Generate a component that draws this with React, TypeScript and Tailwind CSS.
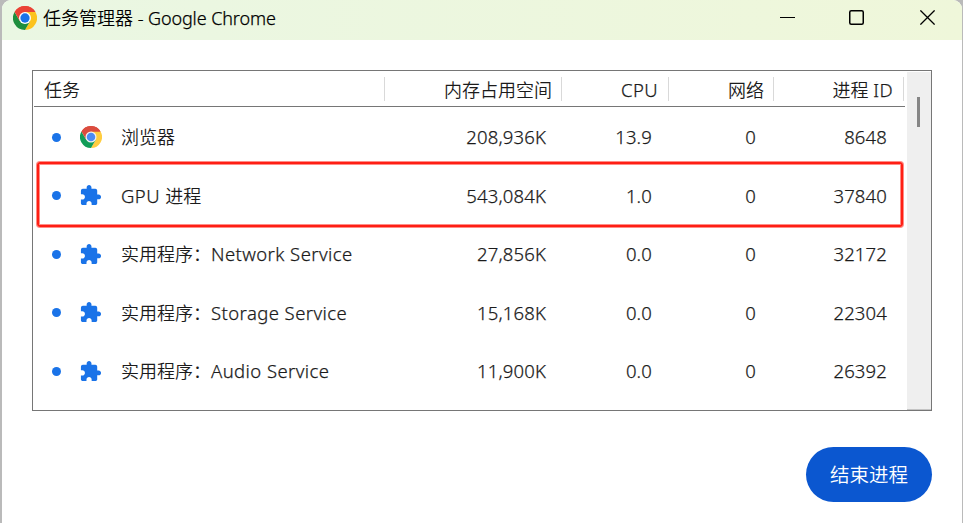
import type { ReactNode } from "react";

type Process = {
  name: ReactNode;
  memory: string;
  cpu: string;
  network: string;
  pid: string;
  chrome?: boolean;
};

const latin = "text-[18.5px] font-light tracking-[0.42px] [-webkit-text-stroke:0.25px_#1b1b1b]";
const number = "text-right text-[18.5px] font-light tracking-[0.15px] [-webkit-text-stroke:0.25px_#1b1b1b]";

const processes: Process[] = [
  { name: "浏览器", memory: "208,936K", cpu: "13.9", network: "0", pid: "8648", chrome: true },
  { name: <><span className={latin}>GPU </span>进程</>, memory: "543,084K", cpu: "1.0", network: "0", pid: "37840" },
  { name: <>实用程序：<span className={latin}>Network Service</span></>, memory: "27,856K", cpu: "0.0", network: "0", pid: "32172" },
  { name: <>实用程序：<span className={latin}>Storage Service</span></>, memory: "15,168K", cpu: "0.0", network: "0", pid: "22304" },
  { name: <>实用程序：<span className={latin}>Audio Service</span></>, memory: "11,900K", cpu: "0.0", network: "0", pid: "26392" },
];

const columns = "grid grid-cols-[351px_177px_107px_105px_130px]";

function ChromeLogo({ className, muted }: { className: string; muted?: boolean }) {
  const red = muted ? "#db4c3f" : "#ea4335";
  const green = muted ? "#129d58" : "#1e8e3e";
  const yellow = muted ? "#ffcd40" : "#fcc31e";
  return (
    <svg viewBox="0 0 48 48" className={className} aria-hidden="true">
      <path d="M24 24 3.2 12A24 24 0 0 1 44.8 12Z" fill={red} />
      <path d="M24 12H44.8A24 24 0 0 1 24 48L34.4 30Z" fill={yellow} />
      <path d="M13.6 30 3.2 12A24 24 0 0 0 24 48L34.4 30Z" fill={green} />
      <path d="M24 12H44.8A24 24 0 0 0 3.2 12L13.6 30Z" fill={red} />
      <circle cx="24" cy="24" r="12" fill={muted ? "#f1f1f1" : "#fff"} />
      <circle cx="24" cy="24" r="9.3" fill={muted ? "#4c8bf5" : "#1a73e8"} />
    </svg>
  );
}

function PuzzleIcon() {
  return (
    <svg viewBox="0 0 24 24" className="mr-px size-[23px]" fill="#1a73e8" aria-hidden="true">
      <path d="M20.5 11H19V7c0-1.1-.9-2-2-2h-4V3.5C13 2.12 11.88 1 10.5 1S8 2.12 8 3.5V5H4c-1.1 0-1.99.9-1.99 2v3.8H3.5c1.49 0 2.7 1.21 2.7 2.7s-1.21 2.7-2.7 2.7H2V20c0 1.1.9 2 2 2h3.8v-1.5c0-1.49 1.21-2.7 2.7-2.7s2.7 1.21 2.7 2.7V22H17c1.1 0 2-.9 2-2v-4h1.5c1.38 0 2.5-1.12 2.5-2.5S21.88 11 20.5 11z" />
    </svg>
  );
}

function HeaderCell({ children }: { children: ReactNode }) {
  return (
    <div className="flex h-6 items-center justify-end border-r border-[#d9d9d9] pr-[9px]">{children}</div>
  );
}

function Row({ process }: { process: Process }) {
  return (
    <div className={`${columns} h-[58.5px] items-center`}>
      <div className="flex items-center pl-[18px]">
        <span className="size-[9px] rounded-full bg-[#1a73e8]" />
        <span className="ml-[18px] flex w-6 justify-center">
          {process.chrome ? <ChromeLogo className="size-[22px]" muted /> : <PuzzleIcon />}
        </span>
        <span className="ml-[18px] whitespace-nowrap">{process.name}</span>
      </div>
      <div className={`pr-[16px] ${number}`}>{process.memory}</div>
      <div className={`pr-[17px] ${number}`}>{process.cpu}</div>
      <div className={`pr-[18px] ${number}`}>{process.network}</div>
      <div className={`pr-[17px] ${number}`}>{process.pid}</div>
    </div>
  );
}

export default function App() {
  return (
    <div className="h-[523px] w-[963px] overflow-hidden bg-[#bababa] font-['Noto_Sans','Noto_Sans_CJK_SC',sans-serif] text-[18px] leading-6 font-[350] text-[#1b1b1b]">
      <div className="ml-[2px] flex h-full w-[960px] flex-col overflow-hidden rounded-t-[9px] bg-white">
        <header className="flex h-10 shrink-0 items-center justify-between bg-linear-to-r from-[#eaf7e3] to-[#eff7da] text-black">
          <div className="flex items-center pb-[5px] pl-[11px]">
            <ChromeLogo className="size-6" />
            <h1 className="ml-[6px]">任务管理器 <span className="font-light tracking-[-0.1px] [-webkit-text-stroke:0.25px_#000]">- Google Chrome</span></h1>
          </div>
          <div className="flex items-center pr-[27px] pb-[5px]">
            <svg viewBox="0 0 15 15" className="size-[15px]" aria-hidden="true">
              <path d="M0 7.5H15" stroke="#000" />
            </svg>
            <svg viewBox="0 0 15 15" className="ml-[54px] size-[15px]" aria-hidden="true">
              <rect x=".75" y=".75" width="13.5" height="13.5" rx="1.5" fill="none" stroke="#000" strokeWidth="1.5" />
            </svg>
            <svg viewBox="0 0 15 15" className="ml-14 size-[15px]" aria-hidden="true">
              <path d="M.4.4 14.6 14.6M14.6.4.4 14.6" stroke="#000" strokeWidth="1.3" />
            </svg>
          </div>
        </header>

        <main className="pt-[30px] pl-[30px]">
          <section className="relative flex h-[341px] w-[900px] justify-between border border-[#767676]">
            <div className="w-[872px] pl-px">
              <div className={`${columns} h-9 items-center border-b border-[#767676] pt-px`}>
                <div className="flex h-6 items-center border-r border-[#d9d9d9] pt-px pl-[10px]">任务</div>
                <HeaderCell><span className="mt-px">内存占用空间</span></HeaderCell>
                <HeaderCell><span className={`mt-px mr-px ${latin}`}>CPU</span></HeaderCell>
                <HeaderCell><span className="mt-px">网络</span></HeaderCell>
                <HeaderCell><span className="mt-px mr-px">进程 <span className={latin}>ID</span></span></HeaderCell>
              </div>
              <div className="pt-px">
                {processes.map((process) => (
                  <Row key={process.pid} process={process} />
                ))}
              </div>
            </div>
            <div className="mt-px flex w-6 justify-center border-b border-[#c4c4c4] bg-[#efefef] pt-[25px] pr-[2px]">
              <div className="h-[30px] w-[3px] bg-[#868686]" />
            </div>
            <div className="absolute top-[91px] left-[4px] h-[65px] w-[866px] rounded-[3px] border-2 border-[#ff1f14] shadow-[0_0_0_1px_#ff8c86,inset_0_0_0_1px_#ff8c86]" />
          </section>
          <button className="mt-9 ml-[774px] flex h-[55px] w-[126px] items-center justify-center rounded-full bg-[#0b57d0] text-[19.5px] text-white">
            结束进程
          </button>
        </main>
      </div>
    </div>
  );
}
